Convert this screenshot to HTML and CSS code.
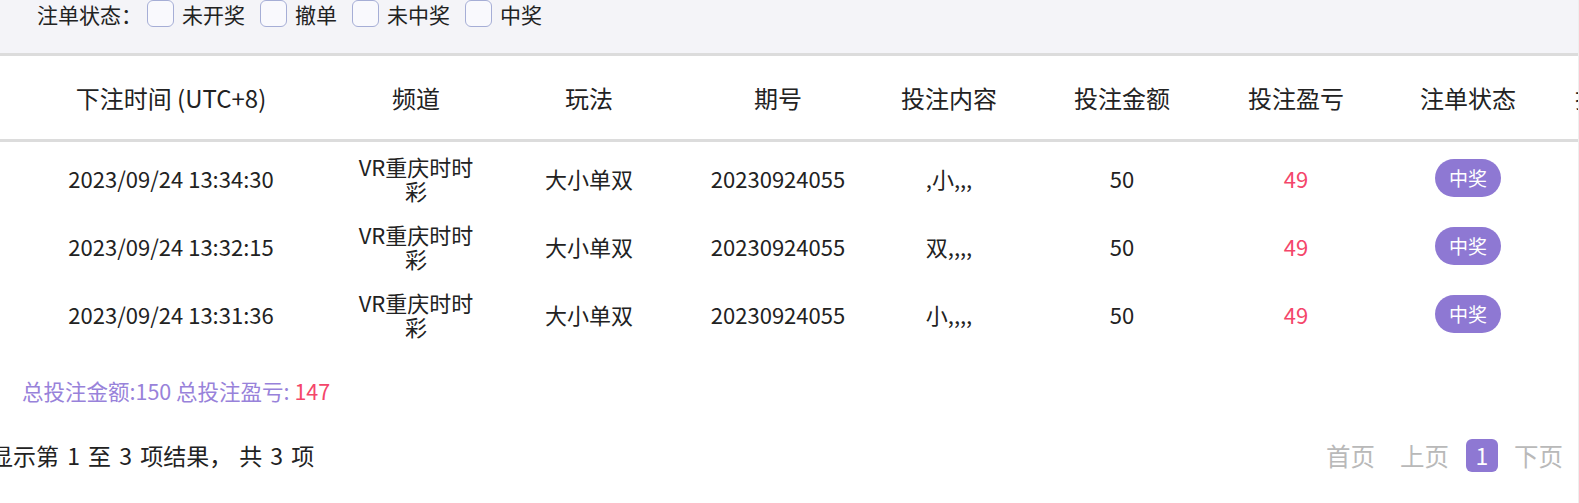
FILE: index.html
```html
<!DOCTYPE html>
<html lang="zh-CN">
<head>
<meta charset="utf-8">
<title>注单记录</title>
<link rel="stylesheet" href="styles.css">
</head>
<body>
<div class="page">
  <div class="filter">
    <span class="filter-label">注单状态：</span>
    <label class="chk"><span class="box"></span><span>未开奖</span></label>
    <label class="chk"><span class="box"></span><span>撤单</span></label>
    <label class="chk"><span class="box"></span><span>未中奖</span></label>
    <label class="chk"><span class="box"></span><span>中奖</span></label>
  </div>

  <div class="table">
    <div class="row head">
      <div class="cell">下注时间 (UTC+8)</div>
      <div class="cell">频道</div>
      <div class="cell">玩法</div>
      <div class="cell">期号</div>
      <div class="cell">投注内容</div>
      <div class="cell">投注金额</div>
      <div class="cell">投注盈亏</div>
      <div class="cell">注单状态</div>
      <div class="cell">投注详情</div>
    </div>
    <div class="tbody">
      <div class="row">
        <div class="cell">2023/09/24 13:34:30</div>
        <div class="cell wrap">VR重庆时时彩</div>
        <div class="cell">大小单双</div>
        <div class="cell">20230924055</div>
        <div class="cell">,小,,,</div>
        <div class="cell">50</div>
        <div class="cell red">49</div>
        <div class="cell"><span class="badge">中奖</span></div>
        <div class="cell"></div>
      </div>
      <div class="row">
        <div class="cell">2023/09/24 13:32:15</div>
        <div class="cell wrap">VR重庆时时彩</div>
        <div class="cell">大小单双</div>
        <div class="cell">20230924055</div>
        <div class="cell">双,,,,</div>
        <div class="cell">50</div>
        <div class="cell red">49</div>
        <div class="cell"><span class="badge">中奖</span></div>
        <div class="cell"></div>
      </div>
      <div class="row">
        <div class="cell">2023/09/24 13:31:36</div>
        <div class="cell wrap">VR重庆时时彩</div>
        <div class="cell">大小单双</div>
        <div class="cell">20230924055</div>
        <div class="cell">小,,,,</div>
        <div class="cell">50</div>
        <div class="cell red">49</div>
        <div class="cell"><span class="badge">中奖</span></div>
        <div class="cell"></div>
      </div>
    </div>
  </div>

  <div class="summary">总投注金额:150 总投注盈亏: <span class="red">147</span></div>

  <div class="footer">
    <div class="info">显示第 1 至 3 项结果<span class="comma">，</span>共 3 项</div>
    <div class="pager">
      <span class="pg first">首页</span>
      <span class="pg prev">上页</span>
      <span class="pg-cur">1</span>
      <span class="pg">下页</span>
    </div>
  </div>
</div>
</body>
</html>
```

FILE: styles.css
```css
html, body {
  margin: 0;
  padding: 0;
  background: #ffffff;
}
body {
  font-family: "Noto Sans CJK SC", "Noto Sans", sans-serif;
  color: #222;
  overflow: hidden;
}
.page {
  width: 1578px;
  height: 503px;
  border-right: 1px solid #eeeeee;
  overflow: hidden;
}
.filter {
  height: 53px;
  background: #f4f4f8;
  display: flex;
  align-items: flex-start;
  padding-left: 37px;
  padding-top: 1px;
  box-sizing: border-box;
  font-size: 21px;
  line-height: 27px;
  color: #222;
}
.filter-label {
  margin-right: 5px;
}
.chk {
  display: flex;
  align-items: flex-start;
  margin-right: 15px;
}
.box {
  width: 25px;
  height: 25px;
  margin-top: -1px;
  border: 1px solid #a6aed6;
  border-radius: 6px;
  background: #f9f9fd;
  margin-right: 8px;
  display: inline-block;
}
.table {
  border-top: 3px solid #dcdcdc;
}
.row {
  display: grid;
  grid-template-columns: 342px 148px 198px 180px 162px 184px 164px 180px 130px;
  height: 68px;
  align-items: center;
  font-size: 22px;
  line-height: 24px;
}
.row.head {
  height: 83px;
  font-size: 24px;
  border-bottom: 3px solid #dcdcdc;
  white-space: nowrap;
}
.tbody {
  padding-top: 2px;
}
.cell {
  text-align: center;
  padding: 0 4px;
}
.cell.wrap {
  padding: 0 12px;
}
.head .cell {
  padding: 0;
  display: flex;
  justify-content: center;
}
.red {
  color: #f4466a;
}
.badge {
  display: inline-block;
  background: #8e78d3;
  color: #fff;
  font-size: 19px;
  line-height: 38px;
  height: 38px;
  padding: 0 14px;
  border-radius: 19px;
}
.summary {
  margin-top: 28px;
  padding-left: 22px;
  font-size: 21.5px;
  line-height: 30px;
  color: #9882da;
}
.footer {
  margin-top: 32px;
  display: flex;
  justify-content: space-between;
  align-items: center;
  height: 34px;
}
.info {
  margin-left: -10px;
  font-size: 23px;
  word-spacing: 3px;
  color: #222;
}
.comma {
  margin-right: 7px;
}
.pager {
  display: flex;
  align-items: center;
  margin-right: 15px;
  font-size: 24.5px;
  color: #b9b9b9;
}
.pg.first {
  margin-right: 25px;
}
.pg.prev {
  margin-right: 17px;
}
.pg-cur {
  width: 32px;
  height: 33px;
  border-radius: 6px;
  background: #8e78d3;
  color: #fff;
  font-size: 23px;
  display: flex;
  align-items: center;
  justify-content: center;
  margin-right: 16px;
}
```
